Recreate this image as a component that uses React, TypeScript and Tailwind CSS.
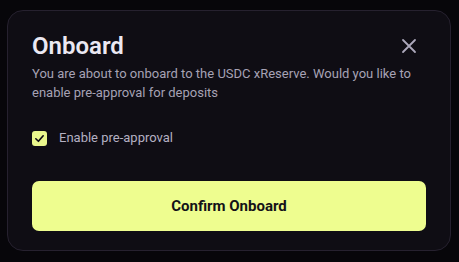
import React, { useState } from 'react';

export default function App() {
  const [preApproval, setPreApproval] = useState(true);

  return (
    <div
      className="w-[459px] h-[262px] bg-[#07060a] pt-[10px] pl-[7px]"
      style={{ fontFamily: 'Roboto, "Noto Sans", sans-serif' }}
    >
      <div className="w-[444px] h-[241px] rounded-2xl border border-[#26212f] bg-[#0f0d14] px-[24px] pt-[19px] pb-[19px] flex flex-col">
        {/* Header */}
        <div className="flex items-start justify-between">
          <h2 className="text-[24px] leading-[32px] font-semibold text-[#ebe8f2]">Onboard</h2>
          <button className="mt-[8px] mr-[9px] text-[#aca8bb]" aria-label="Close">
            <svg width="16" height="16" viewBox="0 0 16 16" fill="none">
              <path d="M2 2L14 14M14 2L2 14" stroke="currentColor" strokeWidth="1.8" strokeLinecap="round" />
            </svg>
          </button>
        </div>
        <p className="mt-[3px] text-[13px] leading-[18.5px] text-[#a6a2b4]">
          You are about to onboard to the USDC xReserve. Would you like to enable pre-approval for deposits
        </p>

        {/* Pre-approval toggle */}
        <label className="mt-[28px] flex items-center gap-[12px] cursor-pointer">
          <button
            onClick={() => setPreApproval(!preApproval)}
            className="w-[15px] h-[15px] rounded-[3px] bg-[#eaf78c] flex items-center justify-center"
          >
            {preApproval && (
              <svg width="11" height="11" viewBox="0 0 12 12" fill="none">
                <path d="M2 6.3L4.8 9L10 3" stroke="#0f0d14" strokeWidth="1.8" strokeLinecap="round" strokeLinejoin="round" />
              </svg>
            )}
          </button>
          <span className="text-[13px] leading-[16px] text-[#b4b0c2]">Enable pre-approval</span>
        </label>

        <button className="mt-[35px] w-[394px] h-[50px] rounded-[7px] bg-[#eefd8f] text-[15px] font-bold text-[#141218]">
          Confirm Onboard
        </button>
      </div>
    </div>
  );
}
